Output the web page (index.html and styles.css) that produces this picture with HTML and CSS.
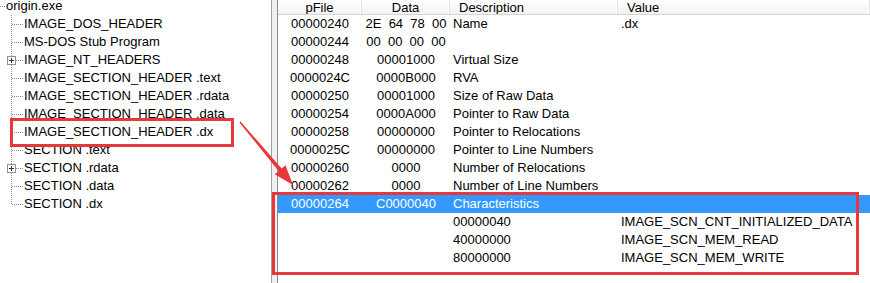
FILE: index.html
```html
<!DOCTYPE html>
<html>
<head>
<meta charset="utf-8">
<link rel="stylesheet" href="styles.css">
</head>
<body>
<div class="app">
  <div class="tree">
    <div class="trow root"><span class="rootline"></span><span class="label">origin.exe</span></div>
    <div class="children">
      <div class="trow"><span class="conn"></span><span class="label">IMAGE_DOS_HEADER</span></div>
      <div class="trow"><span class="conn"></span><span class="label">MS-DOS Stub Program</span></div>
      <div class="trow"><span class="conn"><span class="plus"></span></span><span class="label">IMAGE_NT_HEADERS</span></div>
      <div class="trow"><span class="conn"></span><span class="label">IMAGE_SECTION_HEADER .text</span></div>
      <div class="trow"><span class="conn"></span><span class="label">IMAGE_SECTION_HEADER .rdata</span></div>
      <div class="trow"><span class="conn"></span><span class="label">IMAGE_SECTION_HEADER .data</span></div>
      <div class="trow"><span class="conn"></span><span class="label">IMAGE_SECTION_HEADER .dx</span></div>
      <div class="trow"><span class="conn"></span><span class="label">SECTION .text</span></div>
      <div class="trow"><span class="conn"><span class="plus"></span></span><span class="label">SECTION .rdata</span></div>
      <div class="trow"><span class="conn"></span><span class="label">SECTION .data</span></div>
      <div class="trow last"><span class="conn"></span><span class="label">SECTION .dx</span></div>
    </div>
  </div>
  <div class="splitter"></div>
  <div class="list">
    <div class="lrow head">
      <div class="hc c1">pFile</div>
      <div class="hc c2">Data</div>
      <div class="hc c3">Description</div>
      <div class="hc c4">Value</div>
    </div>
    <div class="lrow"><div class="c1">00000240</div><div class="c2">2E&nbsp;&nbsp;64&nbsp;&nbsp;78&nbsp;&nbsp;00</div><div class="c3">Name</div><div class="c4">.dx</div></div>
    <div class="lrow"><div class="c1">00000244</div><div class="c2">00&nbsp;&nbsp;00&nbsp;&nbsp;00&nbsp;&nbsp;00</div><div class="c3"></div><div class="c4"></div></div>
    <div class="lrow"><div class="c1">00000248</div><div class="c2">00001000</div><div class="c3">Virtual Size</div><div class="c4"></div></div>
    <div class="lrow"><div class="c1">0000024C</div><div class="c2">0000B000</div><div class="c3">RVA</div><div class="c4"></div></div>
    <div class="lrow"><div class="c1">00000250</div><div class="c2">00001000</div><div class="c3">Size of Raw Data</div><div class="c4"></div></div>
    <div class="lrow"><div class="c1">00000254</div><div class="c2">0000A000</div><div class="c3">Pointer to Raw Data</div><div class="c4"></div></div>
    <div class="lrow"><div class="c1">00000258</div><div class="c2">00000000</div><div class="c3">Pointer to Relocations</div><div class="c4"></div></div>
    <div class="lrow"><div class="c1">0000025C</div><div class="c2">00000000</div><div class="c3">Pointer to Line Numbers</div><div class="c4"></div></div>
    <div class="lrow"><div class="c1">00000260</div><div class="c2">0000</div><div class="c3">Number of Relocations</div><div class="c4"></div></div>
    <div class="lrow"><div class="c1">00000262</div><div class="c2">0000</div><div class="c3">Number of Line Numbers</div><div class="c4"></div></div>
    <div class="lrow sel"><div class="c1">00000264</div><div class="c2">C0000040</div><div class="c3">Characteristics</div><div class="c4"></div></div>
    <div class="lrow"><div class="c1"></div><div class="c2"></div><div class="c3">00000040</div><div class="c4">IMAGE_SCN_CNT_INITIALIZED_DATA</div></div>
    <div class="lrow"><div class="c1"></div><div class="c2"></div><div class="c3">40000000</div><div class="c4">IMAGE_SCN_MEM_READ</div></div>
    <div class="lrow"><div class="c1"></div><div class="c2"></div><div class="c3">80000000</div><div class="c4">IMAGE_SCN_MEM_WRITE</div></div>
  </div>
  <div class="mark mark-tree"></div>
  <div class="mark mark-list"></div>
  <svg class="arrow" width="870" height="283" viewBox="0 0 870 283">
    <polygon fill="#e8383d" points="239.43,122.48 278.57,170.99 274.75,174.2 293,185 285.45,165.19 281.63,168.41 240.57,121.52"/>
  </svg>
</div>
</body>
</html>
```

FILE: styles.css
```css
html, body {
  margin: 0;
  padding: 0;
  background: #fff;
}
body {
  width: 870px;
  height: 283px;
  overflow: hidden;
  font-family: "Liberation Sans", Arial, sans-serif;
  font-size: 13px;
  color: #000;
}
.app {
  position: relative;
  display: flex;
  width: 870px;
  height: 283px;
}
.tree {
  width: 271px;
  border-right: 1px solid #a0a0a0;
  background: #fff;
  overflow: hidden;
}
.trow {
  display: flex;
  align-items: stretch;
  height: 18px;
  line-height: 18px;
  white-space: nowrap;
}
.root {
  margin-top: -3px;
}
.rootline {
  width: 5px;
  flex: none;
  background-image: linear-gradient(to right, #8a8a8a 1px, transparent 1px);
  background-size: 2px 1px;
  background-repeat: repeat-x;
  background-position: 0 9px;
}
.root .label {
  padding-left: 1px;
}
.conn {
  position: relative;
  width: 13px;
  margin-left: 11px;
  flex: none;
  background-image:
    linear-gradient(to bottom, #8a8a8a 1px, transparent 1px),
    linear-gradient(to right, #8a8a8a 1px, transparent 1px);
  background-size: 1px 2px, 2px 1px;
  background-repeat: repeat-y, repeat-x;
  background-position: 0 0, 1px 9px;
}
.last .conn::before {
  content: "";
  position: absolute;
  left: 0;
  top: 10px;
  width: 1px;
  height: 8px;
  background: #fff;
}
.plus {
  position: absolute;
  left: -4px;
  top: 5px;
  width: 7px;
  height: 7px;
  border: 1px solid #919191;
  background: #fff;
}
.plus::before {
  content: "";
  position: absolute;
  left: 1px;
  top: 3px;
  width: 5px;
  height: 1px;
  background: #333;
}
.plus::after {
  content: "";
  position: absolute;
  left: 3px;
  top: 1px;
  width: 1px;
  height: 5px;
  background: #333;
}
.splitter {
  width: 5px;
  background: #f0f0f0;
  border-right: 1px solid #8c8c8c;
  flex: none;
}
.list {
  flex: 1;
  background: #fff;
  overflow: hidden;
}
.lrow {
  display: grid;
  grid-template-columns: 84px 88px 168px 1fr;
  height: 18px;
  line-height: 18px;
  white-space: nowrap;
}
.lrow.head {
  height: 14px;
  line-height: 15px;
  background: linear-gradient(to bottom, #ffffff, #f2f2f2);
  border-bottom: 1px solid #d5d5d5;
  overflow: hidden;
}
.hc {
  border-right: 1px solid #e3e3e3;
  box-shadow: inset -1px 0 0 #fff;
}
.hc.c1, .hc.c2 { text-align: center; }
.hc.c3, .hc.c4 { padding-left: 9px; text-align: left; }
.c1 { text-align: center; }
.c2 { text-align: center; }
.c3 { padding-left: 3px; }
.c4 { padding-left: 3px; }
.lrow.sel {
  background: #3399ff;
  color: #fff;
}
.mark {
  position: absolute;
  border: 3px solid #e8383d;
  box-sizing: border-box;
  pointer-events: none;
}
.mark-tree {
  left: 10px;
  top: 118px;
  width: 224px;
  height: 29px;
}
.mark-list {
  left: 272px;
  top: 192px;
  width: 587px;
  height: 83px;
}
.arrow {
  position: absolute;
  left: 0;
  top: 0;
  pointer-events: none;
}
```
